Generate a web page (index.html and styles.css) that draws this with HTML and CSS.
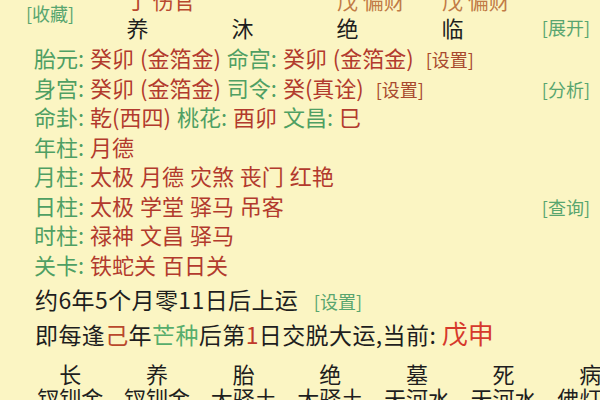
FILE: index.html
```html
<!DOCTYPE html>
<html lang="zh-CN">
<head>
<meta charset="utf-8">
<title>排盘</title>
<link rel="stylesheet" href="styles.css">
</head>
<body>
<div class="page">
  <div class="top">
    <div class="fav">[收藏]</div>
    <div class="god c1 god-red">丁 伤官</div>
    <div class="god c3">戊 偏财</div>
    <div class="god c4">戊 偏财</div>
    <div class="stage c1">养</div>
    <div class="stage c2">沐</div>
    <div class="stage c3">绝</div>
    <div class="stage c4">临</div>
    <div class="btn expand">[展开]</div>
  </div>

  <div class="info">
    <div class="row"><span><span class="lbl">胎元:</span> <span class="val">癸卯 (金箔金)</span> <span class="lbl">命宫:</span> <span class="val">癸卯 (金箔金)</span> <span class="set">[设置]</span></span></div>
    <div class="row"><span><span class="lbl">身宫:</span> <span class="val">癸卯 (金箔金)</span> <span class="lbl">司令:</span> <span class="val">癸(真诠)</span> <span class="set">[设置]</span></span><span class="btn">[分析]</span></div>
    <div class="row"><span><span class="lbl">命卦:</span> <span class="val">乾(西四)</span> <span class="lbl">桃花:</span> <span class="val">酉卯</span> <span class="lbl">文昌:</span> <span class="val">巳</span></span></div>
    <div class="row"><span><span class="lbl">年柱:</span> <span class="val">月德</span></span></div>
    <div class="row"><span><span class="lbl">月柱:</span> <span class="val">太极 月德 灾煞 丧门 红艳</span></span></div>
    <div class="row"><span><span class="lbl">日柱:</span> <span class="val">太极 学堂 驿马 吊客</span></span><span class="btn">[查询]</span></div>
    <div class="row"><span><span class="lbl">时柱:</span> <span class="val">禄神 文昌 驿马</span></span></div>
    <div class="row"><span><span class="lbl">关卡:</span> <span class="val">铁蛇关 百日关</span></span></div>
  </div>

  <div class="luck">约6年5个月零11日后上运 <span class="btn luck-set">[设置]</span></div>
  <div class="luck2">即每逢<span class="ji">己</span>年<span class="grn">芒种</span>后第<span class="num">1</span>日交脱大运,当前: <span class="big">戊申</span></div>

  <div class="dayun">
    <div>长</div><div>养</div><div>胎</div><div>绝</div><div>墓</div><div>死</div><div>病</div>
    <div>钗钏金</div><div>钗钏金</div><div>大驿土</div><div>大驿土</div><div>天河水</div><div>天河水</div><div>佛灯火</div>
  </div>
</div>
</body>
</html>
```

FILE: styles.css
```css
html, body {
  margin: 0;
  padding: 0;
  width: 600px;
  height: 400px;
  overflow: hidden;
  background: #fbf5c3;
}

.page {
  font-family: "Noto Sans CJK SC", "Noto Sans", sans-serif;
  color: #1e1e1e;
}

/* header */
.top {
  display: grid;
  grid-template-columns: 85px repeat(4, 105px) 1fr;
  grid-template-rows: 27px 24px;
  margin-top: -12px;
}

.fav {
  grid-column: 1;
  grid-row: 1 / span 2;
  padding-left: 26px;
  padding-top: 13px;
  font-size: 18px;
  line-height: 24px;
  color: #58a56f;
}

.god {
  grid-row: 1;
  padding-left: 42px;
  white-space: nowrap;
  font-size: 21px;
  line-height: 24px;
  color: #c17b46;
}

.god-red {
  color: #b8492f;
}

.c1 { grid-column: 2; }
.c2 { grid-column: 3; }
.c3 { grid-column: 4; }
.c4 { grid-column: 5; }

.stage {
  grid-row: 2;
  text-align: center;
  font-size: 22px;
  line-height: 24px;
}

.btn {
  font-size: 18px;
  color: #58a56f;
}

.expand {
  grid-column: 6;
  grid-row: 2;
  text-align: right;
  padding-right: 10px;
  line-height: 24px;
}

/* info rows */
.info {
  margin-top: 4px;
  padding: 0 10px 0 34px;
}

.row {
  display: flex;
  justify-content: space-between;
  align-items: baseline;
  font-size: 22px;
  line-height: 29.5px;
  height: 29.5px;
  white-space: nowrap;
  word-spacing: 1px;
}

.lbl {
  color: #4f9f63;
}

.val {
  color: #b23a2d;
}

.set {
  margin-left: 6px;
  font-size: 18px;
  color: #a8492e;
}

/* luck lines */
.luck {
  margin-top: 5px;
  padding-left: 35px;
  font-size: 23px;
  letter-spacing: 0.4px;
  line-height: 31px;
  white-space: nowrap;
}

.luck-set {
  margin-left: 10px;
  letter-spacing: 0;
}

.luck2 {
  padding-left: 35px;
  font-size: 23px;
  letter-spacing: 0.4px;
  line-height: 32px;
  height: 32px;
  white-space: nowrap;
}

.ji {
  color: #b9482c;
}

.grn {
  color: #57ad6c;
}

.num {
  color: #c0392b;
}

.big {
  font-size: 26px;
  line-height: 32px;
  letter-spacing: 0;
  color: #d6392c;
}

/* da yun table */
.dayun {
  margin-top: 12px;
  padding-left: 27px;
  display: grid;
  grid-template-columns: repeat(7, 86.67px);
  grid-auto-rows: 24px;
  font-size: 22px;
  line-height: 24px;
  text-align: center;
  white-space: nowrap;
}
```
